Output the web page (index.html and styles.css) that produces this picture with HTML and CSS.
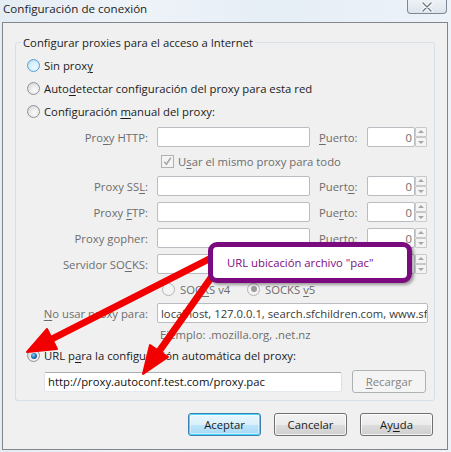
FILE: index.html
```html
<!DOCTYPE html>
<html lang="es">
<head>
<meta charset="utf-8">
<title>Configuración de conexión</title>
<link rel="stylesheet" href="styles.css">
</head>
<body>
<div class="window">
  <div class="titlebar">
    <span class="title">Configuración de conexión</span>
    <span class="close"><svg width="14" height="10" viewBox="0 0 14 10"><path d="M3 1 L11 9 M11 1 L3 9" stroke="#fff" stroke-width="3.2" stroke-linecap="round"/><path d="M3 1 L11 9 M11 1 L3 9" stroke="#6b7785" stroke-width="1.4" stroke-linecap="round"/></svg></span>
  </div>
  <div class="client">
    <div class="group">
      <div class="legend">Configurar proxies para el acceso a Internet</div>
      <div class="rrow first"><span class="radio hot"></span><span class="rtext">Sin prox<u>y</u></span></div>
      <div class="rrow"><span class="radio"></span><span class="rtext">Auto<u>d</u>etectar configuración del proxy para esta red</span></div>
      <div class="rrow"><span class="radio"></span><span class="rtext">Configuración <u>m</u>anual del proxy:</span></div>

      <div class="prow top"><span class="plabel">Pro<u>x</u>y HTTP:</span><span class="field host"></span><span class="portlabel"><u>P</u>uerto:</span><span class="field port">0</span><span class="spin"><i class="up"></i><i class="down"></i></span></div>
      <div class="crow"><span class="check"><svg width="11" height="11" viewBox="0 0 11 11"><path d="M2.2 5.8 L4.4 8.2 L8.8 1.8" fill="none" stroke="#a8a8a8" stroke-width="1.6"/></svg></span><span class="dtext">U<u>s</u>ar el mismo proxy para todo</span></div>
      <div class="prow flush"><span class="plabel">Proxy SS<u>L</u>:</span><span class="field host"></span><span class="portlabel">Puert<u>o</u>:</span><span class="field port">0</span><span class="spin"><i class="up"></i><i class="down"></i></span></div>
      <div class="prow"><span class="plabel">Proxy <u>F</u>TP:</span><span class="field host"></span><span class="portlabel">Pue<u>r</u>to:</span><span class="field port">0</span><span class="spin"><i class="up"></i><i class="down"></i></span></div>
      <div class="prow"><span class="plabel">Proxy <u>g</u>opher:</span><span class="field host"></span><span class="portlabel">Puer<u>t</u>o:</span><span class="field port">0</span><span class="spin"><i class="up"></i><i class="down"></i></span></div>
      <div class="prow"><span class="plabel">Servidor SO<u>C</u>KS:</span><span class="field host"></span><span class="portlabel">Puerto:</span><span class="field port">0</span><span class="spin"><i class="up"></i><i class="down"></i></span></div>

      <div class="srow"><span class="sitem"><span class="radio dis"></span><span class="dtext">SOC<u>K</u>S v4</span></span><span class="sitem"><span class="radio dis on"></span><span class="dtext">SOCKS <u>v</u>5</span></span></div>
      <div class="prow nrow"><span class="plabel"><u>N</u>o usar proxy para:</span><span class="field noproxy">localhost, 127.0.0.1, search.sfchildren.com, www.sfchildren.com</span></div>
      <div class="erow"><span class="dtext">Ejemplo: .mozilla.org, .net.nz</span></div>
      <div class="rrow urlradio"><span class="radio on"></span><span class="rtext">URL p<u>a</u>ra la configuración automática del proxy:</span></div>
      <div class="urow"><span class="field url">http://proxy.autoconf.test.com/proxy.pac</span><span class="btn disabled"><u>R</u>ecargar</span></div>
    </div>
    <div class="buttons">
      <span class="btn default">Aceptar</span>
      <span class="btn">Cancelar</span>
      <span class="btn">Ay<u>u</u>da</span>
    </div>
  </div>

  <svg class="arrows" width="451" height="452" viewBox="0 0 451 452">
    <g fill="#f20000" stroke="#f20000" stroke-linejoin="round">
      <line x1="215" y1="256" x2="44" y2="343" stroke-width="7"/>
      <polygon points="27,352 57,349 47,329" stroke-width="2"/>
      <line x1="225" y1="258" x2="153" y2="360" stroke-width="7"/>
      <polygon points="143,374 168,357 150,345" stroke-width="2"/>
    </g>
  </svg>
  <div class="callout">URL ubicación archivo "pac"</div>
</div>
</body>
</html>
```

FILE: styles.css
```css
* { box-sizing: border-box; }
html, body { margin: 0; padding: 0; }
body {
  width: 451px;
  height: 452px;
  overflow: hidden;
  font-family: "Open Sans", "Liberation Sans", sans-serif;
  font-size: 11.3px;
  color: #1b1b1b;
}
u { text-decoration: underline; text-underline-offset: 2px; }
.window {
  position: relative;
  width: 451px;
  height: 452px;
  display: flex;
  flex-direction: column;
  background: linear-gradient(90deg, #e4ecf4 0%, #eef3f8 30%, #e6eef6 60%, #edf2f8 100%);
}
.titlebar {
  height: 22px;
  display: flex;
  align-items: flex-start;
  padding-left: 3px;
  flex: none;
}
.title {
  line-height: 18px;
  font-size: 11.6px;
  color: #1e1e1e;
}
.close {
  margin-left: auto;
  margin-right: 4px;
  width: 40px;
  height: 14px;
  border: 1px solid #7d8896;
  border-top: none;
  border-radius: 0 0 4px 4px;
  background: linear-gradient(#eef2f6, #dde4ec);
  display: flex;
  align-items: center;
  justify-content: center;
}
.client {
  flex: 1;
  margin: 0 3px 2px 2px;
  border: 1px solid #80868c;
  background: #f0f0f0;
  display: flex;
  flex-direction: column;
}
.group {
  margin: 19px 12px 0 12px;
  border: 1px solid #d5dfe5;
  border-radius: 3px;
  padding-bottom: 7px;
  display: flex;
  flex-direction: column;
}
.legend {
  width: max-content;
  margin: -8px 0 0 5px;
  padding: 0 2px;
  height: 15px;
  line-height: 15px;
  background: #f0f0f0;
}
.rrow {
  height: 23px;
  display: flex;
  align-items: center;
  padding-left: 11px;
  gap: 4px;
}
.rrow.first { margin-top: 4px; }
.rrow.urlradio { height: 21px; }
.radio {
  width: 13px;
  height: 13px;
  border-radius: 50%;
  border: 1px solid #8f9396;
  background: radial-gradient(circle at 60% 65%, #fbfbfb 0%, #eaeaea 45%, #cfcfcf 100%);
  flex: none;
  position: relative;
}
.radio.hot {
  border-color: #5a9fd0;
  background: radial-gradient(circle at 60% 65%, #eef9ff 0%, #d3eefc 50%, #a6d3ef 100%);
}
.radio.on::after {
  content: "";
  position: absolute;
  left: 2.5px;
  top: 2.5px;
  width: 6px;
  height: 6px;
  border-radius: 50%;
  background: radial-gradient(circle at 40% 35%, #8ad0f5 0%, #2a78bb 45%, #0b3b68 100%);
}
.radio.dis { border-color: #b4b4b4; background: #f4f4f4; }
.radio.dis.on::after { background: #9a9a9a; }
.rtext { white-space: nowrap; }
.dtext { color: #6d6d6d; white-space: nowrap; }
.prow {
  height: 20px;
  display: flex;
  align-items: center;
  margin-top: 6px;
}
.prow.top { margin-top: 4px; }
.prow.flush { margin-top: 0; }
.plabel {
  width: 132px;
  text-align: right;
  margin-right: 9px;
  color: #6d6d6d;
  white-space: nowrap;
}
.field {
  height: 20px;
  background: #fff;
  border: 1px solid #b9bcc0;
  border-radius: 2px;
  display: flex;
  align-items: center;
  white-space: nowrap;
  overflow: hidden;
}
.field.host { width: 153px; }
.portlabel {
  width: 48px;
  margin-left: 9px;
  color: #6d6d6d;
  white-space: nowrap;
}
.field.port {
  width: 48px;
  justify-content: flex-end;
  padding-right: 2px;
  color: #6d6d6d;
}
.spin {
  width: 12px;
  height: 20px;
  display: flex;
  flex-direction: column;
  gap: 0;
}
.spin i {
  flex: 1;
  border: 1px solid #c9c9c9;
  background: #f4f4f4;
  border-radius: 1px;
  position: relative;
}
.spin i::after {
  content: "";
  position: absolute;
  left: 2px;
  width: 0;
  height: 0;
  border-left: 3px solid transparent;
  border-right: 3px solid transparent;
}
.spin i.up::after { top: 2px; border-bottom: 3px solid #a5a5a5; }
.spin i.down::after { top: 3px; border-top: 3px solid #a5a5a5; }
.crow {
  height: 29px;
  display: flex;
  align-items: center;
  padding-left: 145px;
  gap: 4px;
}
.check {
  width: 13px;
  height: 13px;
  border: 1px solid #b1b1b1;
  background: #f4f4f4;
  display: flex;
  align-items: center;
  justify-content: center;
}
.srow {
  height: 18px;
  margin-top: 6px;
  display: flex;
  align-items: center;
  padding-left: 146px;
}
.sitem {
  width: 85px;
  display: flex;
  align-items: center;
  gap: 5px;
}
.prow.nrow { margin-top: 5px; }
.field.noproxy {
  width: 271px;
  padding-left: 3px;
  color: #3a3a3a;
}
.erow {
  height: 22px;
  display: flex;
  align-items: center;
  padding-left: 144px;
}
.urow {
  height: 23px;
  margin-top: 4px;
  display: flex;
  align-items: center;
  padding-left: 28px;
}
.field.url {
  width: 298px;
  padding-left: 3px;
  border-color: #abadb3 #dbdfe6 #e3e9ef #e2e3ea;
  color: #111;
}
.btn {
  width: 73px;
  height: 23px;
  border: 1px solid #707070;
  border-radius: 3px;
  background: linear-gradient(#f2f2f2 0%, #ebebeb 50%, #dddddd 50%, #cfcfcf 100%);
  box-shadow: inset 0 0 0 1px rgba(255,255,255,0.75);
  display: flex;
  align-items: center;
  justify-content: center;
  white-space: nowrap;
  flex: none;
}
.btn.disabled {
  width: 74px;
  margin-left: 10px;
  border-color: #adb2b5;
  background: #f4f4f4;
  box-shadow: none;
  color: #838383;
}
.btn.default {
  border-color: #3c7fb1;
  box-shadow: inset 0 0 0 1px #48d8fb, inset 0 0 0 2px rgba(255,255,255,0.4);
  background: linear-gradient(#eaf6fd 0%, #d9f0fc 50%, #bee6fd 50%, #a7d9f5 100%);
}
.buttons {
  margin-top: 12px;
  display: flex;
  justify-content: flex-end;
  gap: 13px;
  padding-right: 14px;
}
.arrows {
  position: absolute;
  left: 0;
  top: 0;
  pointer-events: none;
}
.callout {
  position: absolute;
  left: 208px;
  top: 242px;
  width: 204px;
  height: 41px;
  border: 5px solid #7c0a7f;
  border-radius: 9px;
  background: #fff;
  box-shadow: 2px 2px 3px rgba(0,0,0,0.35);
  color: #7c0a7f;
  padding-left: 14px;
  display: flex;
  align-items: center;
  white-space: nowrap;
}
```
